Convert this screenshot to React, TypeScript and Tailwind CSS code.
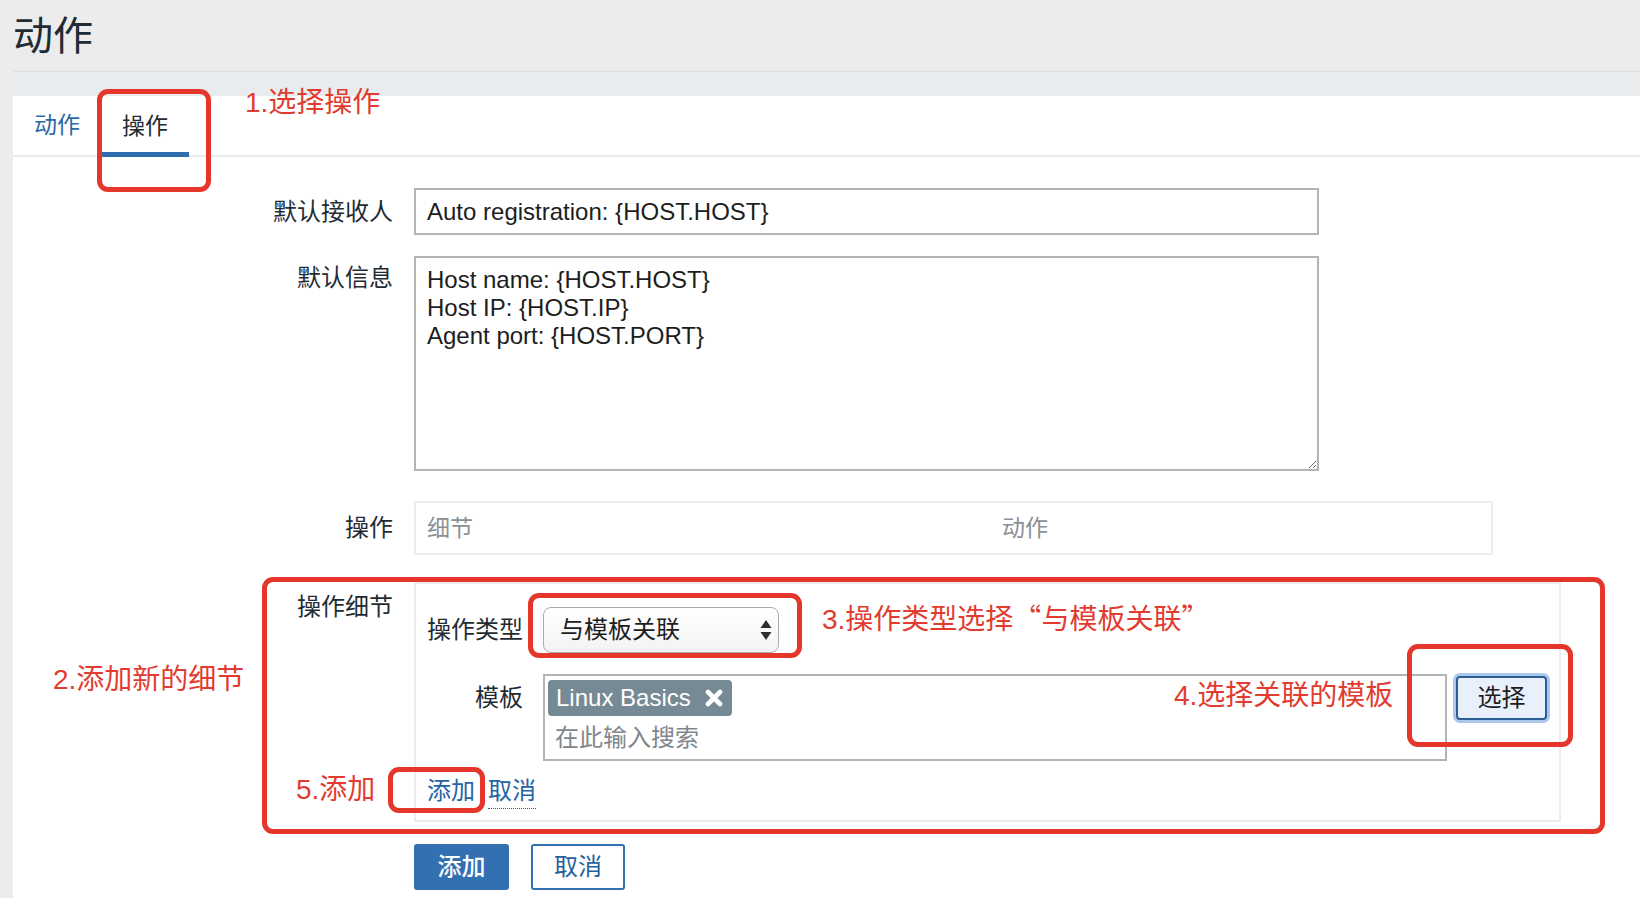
const ff = "[font-family:'Liberation_Sans','Noto_Sans_CJK_SC',sans-serif]";
const cjk = "[font-family:'Noto_Sans_CJK_SC',sans-serif]";

function RedBox({ className }: { className: string }) {
  return <div className={`absolute border-[5px] border-[#e5362b] rounded-[11px] pointer-events-none ${className}`} />;
}

function Note({ className, children }: { className: string; children: React.ReactNode }) {
  return (
    <div className={`absolute text-[28px] leading-[32px] text-[#e23b2f] whitespace-nowrap ${className}`}>{children}</div>
  );
}

function SelectArrows() {
  return (
    <svg width="12" height="24" viewBox="0 0 12 24">
      <path d="M6 2 L11.5 10 H0.5 Z" fill="#2b2f33" />
      <path d="M6 22 L11.5 14 H0.5 Z" fill="#2b2f33" />
    </svg>
  );
}

function HeavyX() {
  return (
    <svg width="18" height="18" viewBox="0 0 18 18">
      <path d="M3 3 L15 15 M15 3 L3 15" stroke="#fff" strokeWidth="4.6" strokeLinecap="round" />
    </svg>
  );
}

export default function App() {
  return (
    <div className={`relative w-full h-[898px] overflow-hidden bg-[#ececec] ${ff} text-[#1f2c33]`}>
      {/* page header */}
      <div className="pl-[13px] h-[96px] flex flex-col">
        <div className="h-[72px] border-b border-[#dcdfe2] flex items-center pt-[1px]">
          <h1 className="text-[40px] leading-none font-normal">动作</h1>
        </div>
        <div className="flex-1 bg-[#e9ecef]" />
      </div>

      {/* white panel */}
      <div className="ml-[13px] bg-white h-[802px]">
        {/* tabs */}
        <div className="flex h-[61px] border-b-2 border-[#ebebeb]">
          <div className="px-[21px] flex items-center text-[23px] text-[#2a68a6]">动作</div>
          <div className="px-[21px] flex items-center text-[23px] text-[#1f2c33] border-b-[5px] border-[#2f6db0] -mb-[2px] pt-[5px]">
            操作
          </div>
        </div>

        {/* form */}
        <div className="flex flex-col text-[24px]">
          {/* default recipient */}
          <div className="flex items-center mt-[31px]">
            <div className="w-[380px] text-right leading-[28px]">默认接收人</div>
            <div className="ml-[21px] w-[905px] h-[47px] border-2 border-[#b4b4b4] px-[11px] flex items-center text-[#1d1d1d]">
              Auto registration: {"{HOST.HOST}"}
            </div>
          </div>

          {/* default message */}
          <div className="flex items-start mt-[21px]">
            <div className="w-[380px] text-right leading-[28px] pt-[8px]">默认信息</div>
            <textarea
              readOnly
              className="ml-[21px] w-[905px] h-[215px] border-2 border-[#b4b4b4] px-[11px] pt-[8px] leading-[28px] text-[24px] text-[#1d1d1d] outline-none"
              defaultValue={"Host name: {HOST.HOST}\nHost IP: {HOST.IP}\nAgent port: {HOST.PORT}"}
            />
          </div>

          {/* operations */}
          <div className="flex items-center mt-[30px]">
            <div className="w-[380px] text-right leading-[28px]">操作</div>
            <div className="ml-[21px] w-[1079px] h-[54px] border-2 border-[#ececec] flex items-center px-[11px] text-[23px] text-[#8b9096]">
              <div className="w-[575px]">细节</div>
              <div>动作</div>
            </div>
          </div>

          {/* operation details */}
          <div className="flex items-start mt-[27px]">
            <div className="w-[380px] text-right leading-[28px] pt-[11px]">操作细节</div>
            <div className="ml-[21px] w-[1147px] border-2 border-[#ececec] pt-[23px] pb-[11px] pl-[11px] flex flex-col">
              <div className="flex items-center">
                <div className="w-[96px] text-right leading-[28px]">操作类型</div>
                <div className="ml-[20px] w-[236px] h-[46px] rounded-[8px] border border-[#ababab] bg-gradient-to-b from-white to-[#f3f3f3] flex items-center justify-between pl-[16px] pr-[6px]">
                  <span className="text-[#1d1d1d]">与模板关联</span>
                  <SelectArrows />
                </div>
              </div>

              <div className="flex items-start mt-[21px]">
                <div className="w-[96px] text-right leading-[28px] pt-[10px]">模板</div>
                <div className="ml-[20px] w-[904px] h-[87px] border-2 border-[#b4b4b4] pt-[4px] pl-[3px] flex flex-col items-start">
                  <div className="h-[36px] rounded-[4px] bg-[#768a96] text-white flex items-center pl-[8px] pr-[9px] gap-[14px]">
                    <span>Linux Basics</span>
                    <HeavyX />
                  </div>
                  <div className="mt-[8px] ml-[7px] leading-[28px] text-[#80868b]">在此输入搜索</div>
                </div>
                <div className="ml-[9px] mt-[2px] w-[91px] h-[44px] rounded-[4px] border-2 border-[#2b5f96] bg-[#e7f0fb] ring-[3px] ring-[#abc9ec] flex items-center justify-center text-[#1d1d1d]">
                  选择
                </div>
              </div>

              <div className="flex items-center gap-[13px] mt-[16px] text-[#2464a4] leading-[28px]">
                <span className="border-b border-dotted border-[#2464a4] pb-[3px]">添加</span>
                <span className="border-b border-dotted border-[#2464a4] pb-[3px]">取消</span>
              </div>
            </div>
          </div>

          {/* buttons */}
          <div className="flex mt-[22px] ml-[401px]">
            <div className="w-[95px] h-[46px] rounded-[3px] bg-[#3270b1] text-white font-medium flex items-center justify-center">
              添加
            </div>
            <div className="ml-[22px] w-[94px] h-[46px] rounded-[3px] border-2 border-[#3270b1] bg-white text-[#245f9e] flex items-center justify-center">
              取消
            </div>
          </div>
        </div>
      </div>

      {/* annotations */}
      <RedBox className="left-[97px] top-[89px] w-[114px] h-[103px] border-[4px]" />
      <Note className="left-[245px] top-[87px]">1.选择操作</Note>

      <RedBox className="left-[262px] top-[577px] w-[1343px] h-[257px]" />
      <Note className="left-[53px] top-[664px]">2.添加新的细节</Note>

      <RedBox className="left-[528px] top-[593px] w-[274px] h-[65px]" />
      <Note className="left-[822px] top-[601px]">
        3.操作类型选择<span className={cjk}>“</span>与模板关联<span className={cjk}>”</span>
      </Note>

      <RedBox className="left-[1407px] top-[644px] w-[166px] h-[103px]" />
      <Note className="left-[1174px] top-[680px]">4.选择关联的模板</Note>

      <RedBox className="left-[388px] top-[767px] w-[97px] h-[46px]" />
      <Note className="left-[296px] top-[774px]">5.添加</Note>
    </div>
  );
}
